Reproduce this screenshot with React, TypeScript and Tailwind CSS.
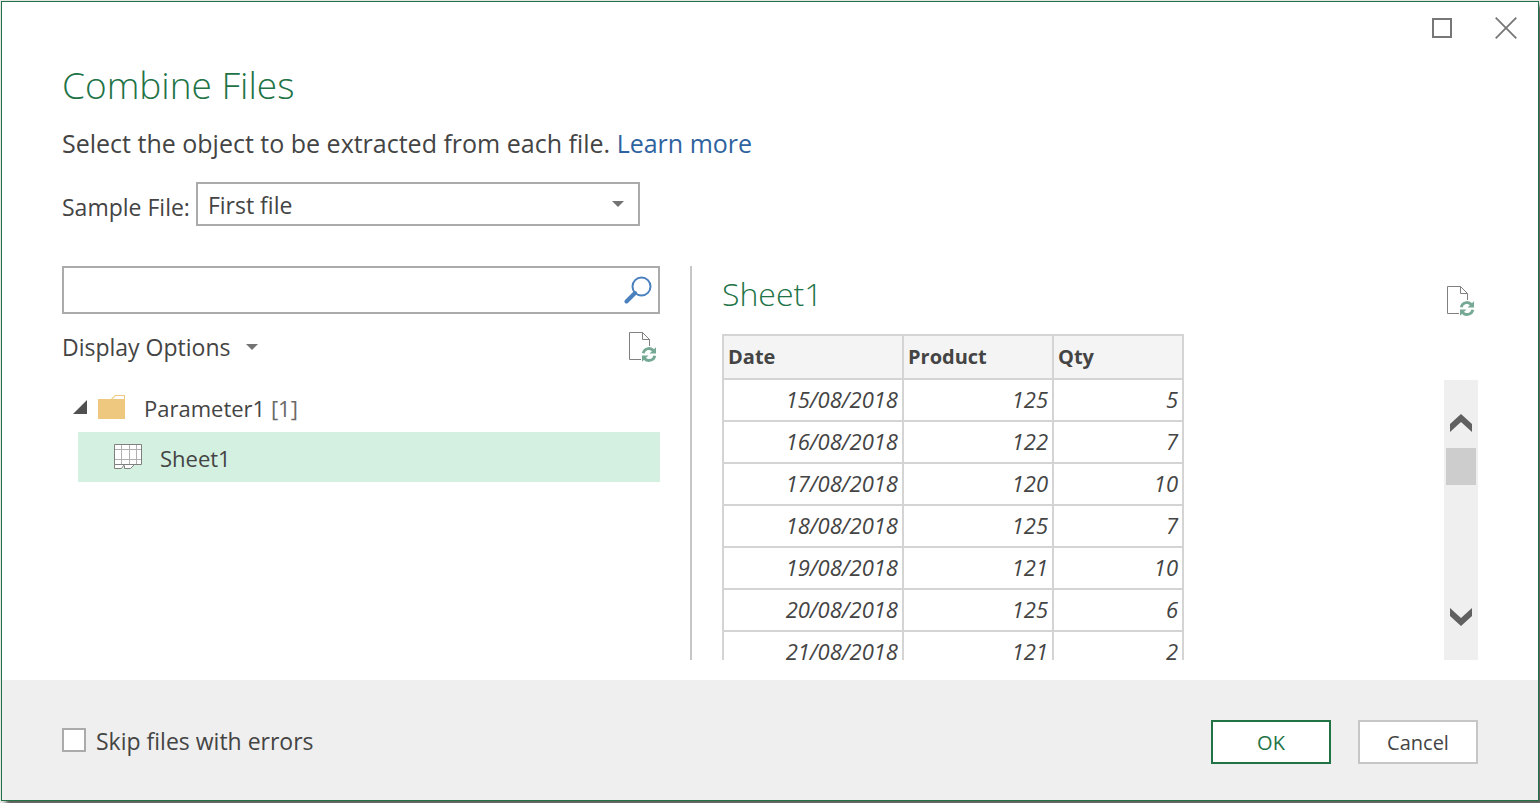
import { useState } from "react";

const rows = [
  ["15/08/2018", 125, 5],
  ["16/08/2018", 122, 7],
  ["17/08/2018", 120, 10],
  ["18/08/2018", 125, 7],
  ["19/08/2018", 121, 10],
  ["20/08/2018", 125, 6],
  ["21/08/2018", 121, 2],
];

function Caret() {
  return (
    <svg width="12" height="6" viewBox="0 0 12 6" fill="#737373" aria-hidden="true">
      <path d="M0 0h12L6 6z" />
    </svg>
  );
}

function RefreshFileIcon() {
  return (
    <svg width="28" height="31" viewBox="0 0 28 31" fill="none" aria-hidden="true">
      <path d="M12 27.5H.5V.5h13l7 7V14" stroke="#808080" />
      <path d="M13.5 .5v7h7" stroke="#808080" />
      <g stroke="#75a993" strokeWidth="2.8">
        <path d="M14.2 21.3a5.9 5.9 0 0 1 10.2-2.8" />
        <path d="M25.8 23.7a5.9 5.9 0 0 1-10.2 2.8" />
      </g>
      <path d="M27 15.3v6.2h-6.500zM13 29.700v-6.200h6.500z" fill="#75a993" />
    </svg>
  );
}

function Chevron({ down = false }: { down?: boolean }) {
  return (
    <svg width="22" height="18" viewBox="0 0 22 18" fill="#606060" aria-hidden="true">
      <path d={down ? "M0 0l11 10L22 0v8L11 18 0 8z" : "M0 18l11-10 11 10v-8L11 0 0 10z"} />
    </svg>
  );
}

function Header() {
  return (
    <header className="flex justify-end gap-[43px] pt-[15px] pr-[21px]">
      <button type="button" aria-label="Maximize" className="mt-px h-5 w-5 border-2 border-[#777777]" />
      <button type="button" aria-label="Close">
        <svg width="22" height="22" viewBox="0 0 22 22" stroke="#777777" strokeWidth="1.8" aria-hidden="true">
          <path d="M.7 .7l20.6 20.6M21.3 .7L.7 21.3" />
        </svg>
      </button>
    </header>
  );
}

function ObjectTree() {
  return (
    <section className="flex min-w-0 flex-col">
      <div className="flex h-12 items-center border-2 border-[#ababab] pr-1.5">
        <input type="text" aria-label="Search" className="h-full min-w-0 flex-1 px-2 outline-none" />
        <button type="button" aria-label="Search">
          <svg width="28" height="28" viewBox="0 0 28 28" fill="none" stroke="#4a80bd" aria-hidden="true">
            <circle cx="17.5" cy="10.5" r="9" strokeWidth="2" />
            <path d="M11 17L2.5 25.5" strokeWidth="4" strokeLinecap="round" />
          </svg>
        </button>
      </div>
      <div className="flex h-[68px] items-center justify-between pr-[3px] pb-0.5">
        <button type="button" className="flex items-center gap-4">
          Display Options <Caret />
        </button>
        <button type="button" aria-label="Refresh objects">
          <RefreshFileIcon />
        </button>
      </div>
      <ul className="text-[22px]">
        <li>
          <div className="flex h-[50px] items-center pl-[11px]">
            <svg width="14" height="14" viewBox="0 0 14 14" fill="#505050" aria-hidden="true">
              <path d="M14 0v14H0z" />
            </svg>
            <svg className="ml-[11px]" width="27" height="24" viewBox="0 0 27 24" aria-hidden="true">
              <path d="M0 4h13l4-4h10v24H0z" fill="#eec87f" />
              <path d="M14.5 4L17.5 1H26v3z" fill="#fff" />
            </svg>
            <span className="ml-[19px] pt-0.5">
              Parameter1 <span className="text-[#6a6a6a]">[1]</span>
            </span>
          </div>
          <ul className="pl-4">
            <li className="flex h-[50px] items-center bg-[#d4f0e1] pl-9">
              <svg className="mb-0.5" width="28" height="25" viewBox="0 0 28 25" aria-hidden="true">
                <path d="M.5 .5h27v20h-7l-4 4H11l-1.500-2-2 2h-7z" fill="#fff" />
                <path d="M7.5 1v19M15.5 1v19M22.5 1v19M1 5.5h26M1 15.5h26" stroke="#b0b0b0" fill="none" />
                <path d="M.5 .5h27v20H.5zM.5 20.5v4h7l2.5-3.500M10.500 21.500v3h6l4-4" stroke="#808080" fill="none" />
              </svg>
              <span className="ml-[18px] pt-0.5">Sheet1</span>
            </li>
          </ul>
        </li>
      </ul>
    </section>
  );
}

function Preview() {
  return (
    <section className="flex min-h-0 min-w-0 flex-col border-l-2 border-[#c6c6c6] pl-[30px]">
      <div className="flex h-[68px] shrink-0 items-center justify-between pt-0.5 pr-[3px]">
        <h2 className="pb-3.5 text-[32px] leading-none font-light text-[#217346]">Sheet1</h2>
        <button type="button" aria-label="Refresh preview">
          <RefreshFileIcon />
        </button>
      </div>
      <div className="flex min-h-0 flex-1 justify-between">
        <div className="overflow-hidden">
          <table className="w-[462px] table-fixed border-collapse text-[22px] leading-6">
            <thead>
              <tr className="h-11 bg-[#f4f4f4] text-left text-[20px]">
                <th className="w-[180px] border-2 border-[#d4d4d4] px-1">Date</th>
                <th className="w-[150px] border-2 border-[#d4d4d4] px-1">Product</th>
                <th className="border-2 border-[#d4d4d4] px-1">Qty</th>
              </tr>
            </thead>
            <tbody>
              {rows.map((row) => (
                <tr key={row[0]} className="h-[42px] text-right italic">
                  {row.map((value, i) => (
                    <td key={i} className="border-2 border-[#d4d4d4] px-1 pb-0.5">{value}</td>
                  ))}
                </tr>
              ))}
            </tbody>
          </table>
        </div>
        <div className="mt-[46px] flex w-[34px] flex-col bg-[#efefef] py-[26px]">
          <button type="button" aria-label="Scroll up" className="flex h-[34px] items-center justify-center">
            <Chevron />
          </button>
          <div className="mx-0.5 mt-2 h-[37px] bg-[#cdcdcd]" />
          <button type="button" aria-label="Scroll down" className="mt-auto flex h-[34px] items-center justify-center">
            <Chevron down />
          </button>
        </div>
      </div>
    </section>
  );
}

export default function App() {
  const [skip, setSkip] = useState(false);
  return (
    <div className="flex h-screen overflow-hidden bg-[#e6e6e6] pt-px pr-px pb-0.5 pl-px font-['Open_Sans',sans-serif] text-[23px] leading-8 text-[#444444]">
      <main className="flex min-w-0 flex-1 flex-col border border-[#217346] bg-white shadow-[5px_5px_4px_#606060]">
        <Header />
        <div className="flex min-h-0 flex-1 flex-col px-[60px] pb-5">
          <h1 className="mt-5 text-[37px] leading-[52px] font-light text-[#217346]">Combine Files</h1>
          <p className="mt-4 text-[25px]">
            Select the object to be extracted from each file.{" "}
            <a href="#learn-more" className="text-[#2f63a0]">Learn more</a>
          </p>
          <div className="mt-[23px] flex items-center gap-1.5">
            <label htmlFor="sample" className="pt-1.5">Sample File:</label>
            <div className="relative w-[444px]">
              <select id="sample" className="h-11 w-full appearance-none border-2 border-[#ababab] bg-white pt-0.5 pl-2.5">
                <option>First file</option>
              </select>
              <span className="pointer-events-none absolute top-[19px] right-4">
                <Caret />
              </span>
            </div>
          </div>
          <div className="mt-10 grid min-h-0 flex-1 grid-cols-[299fr_394fr] grid-rows-[minmax(0,1fr)] gap-[30px]">
            <ObjectTree />
            <Preview />
          </div>
        </div>
        <footer className="flex h-[120px] shrink-0 items-center justify-between bg-[#efefef] px-[60px]">
          <label className="flex items-center gap-2.5">
            <input
              type="checkbox"
              checked={skip}
              onChange={(e) => setSkip(e.target.checked)}
              className="h-6 w-6 appearance-none border-2 border-[#ababab] bg-white checked:bg-[#217346]"
            />
            <span className="pt-0.5">Skip files with errors</span>
          </label>
          <div className="mt-1 flex gap-[27px] text-[20px]">
            <button type="button" className="h-11 w-[120px] border-2 border-[#217346] bg-white pt-0.5 text-[#217346]">
              OK
            </button>
            <button type="button" className="h-11 w-[120px] border-2 border-[#c6c6c6] bg-white pt-0.5">
              Cancel
            </button>
          </div>
        </footer>
      </main>
    </div>
  );
}
